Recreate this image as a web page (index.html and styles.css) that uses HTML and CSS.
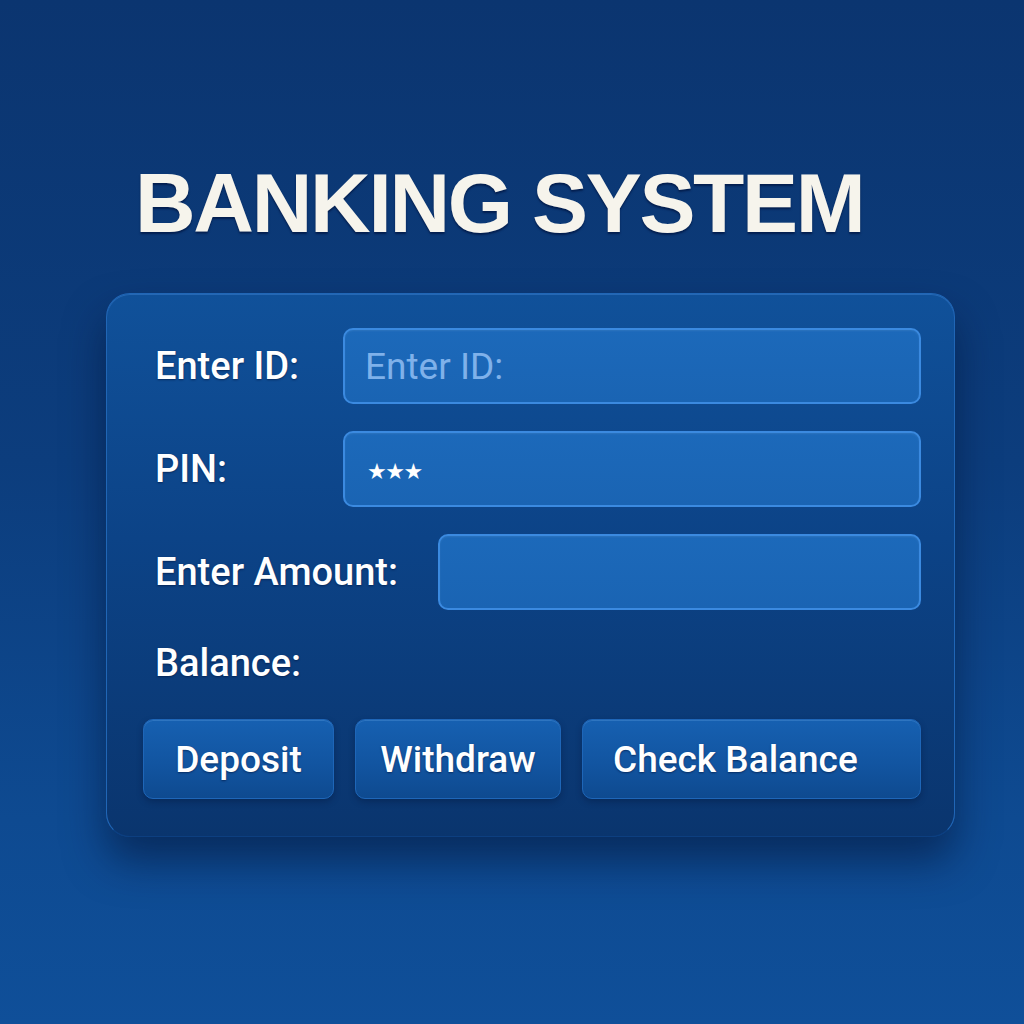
FILE: index.html
```html
<!DOCTYPE html>
<html lang="en">
<head>
<meta charset="utf-8">
<title>Banking System</title>
<link rel="stylesheet" href="styles.css">
</head>
<body>
  <main class="page">
    <h1 class="title">BANKING SYSTEM</h1>
    <section class="card">
      <div class="row">
        <label class="label" for="uid">Enter ID:</label>
        <input class="field" id="uid" type="text" placeholder="Enter ID:">
      </div>
      <div class="row">
        <label class="label" for="pin">PIN:</label>
        <div class="field field-pin" id="pin"><span class="stars">★★★</span></div>
      </div>
      <div class="row row-amount">
        <label class="label label-wide" for="amt">Enter Amount:</label>
        <input class="field" id="amt" type="text">
      </div>
      <div class="balance-row">
        <span class="label">Balance:</span>
      </div>
      <div class="actions">
        <button class="btn btn-deposit">Deposit</button>
        <button class="btn btn-withdraw">Withdraw</button>
        <button class="btn btn-check">Check Balance</button>
      </div>
    </section>
  </main>
</body>
</html>
```
FILE: styles.css
```css
html, body {
  margin: 0;
  padding: 0;
}
body {
  width: 1024px;
  height: 1024px;
  overflow: hidden;
  background: linear-gradient(180deg, #0b3570 0%, #0c3d7d 45%, #0e4a91 80%, #0f4f99 100%);
  font-family: Roboto, "Noto Sans", sans-serif;
  color: #ffffff;
}
.page {
  padding-top: 161px;
}
.title {
  margin: 0 0 48px 135px;
  font-family: "Liberation Sans", Arial, sans-serif;
  font-weight: 700;
  font-size: 84px;
  line-height: 84px;
  height: 84px;
  letter-spacing: -2.3px;
  color: #f6f4ec;
  text-shadow: 0 2px 2px rgba(2, 22, 66, 0.75);
  white-space: nowrap;
}
.card {
  box-sizing: border-box;
  margin-left: 106px;
  width: 849px;
  height: 544px;
  padding: 34px 33px 37px 36px;
  border-radius: 24px;
  border: 1px solid #2066b6;
  border-bottom-color: #0d3f80;
  background: linear-gradient(180deg, #10519a 0%, #0c4387 45%, #0a356e 100%);
  box-shadow: 0 24px 40px rgba(3, 20, 55, 0.55), inset 0 1px 0 rgba(80, 150, 230, 0.35);
  display: flex;
  flex-direction: column;
}
.row {
  display: flex;
  align-items: center;
  height: 76px;
  margin-bottom: 27px;
}
.row-amount {
  margin-bottom: 0;
}
.label {
  box-sizing: border-box;
  flex: 0 0 200px;
  padding-left: 12px;
  font-size: 38px;
  font-weight: 500;
  line-height: 38px;
  color: #ffffff;
  text-shadow: 0 1px 2px rgba(2, 20, 60, 0.6);
  white-space: nowrap;
}
.label-wide {
  flex-basis: 295px;
}
.field {
  box-sizing: border-box;
  flex: 1 1 0;
  width: 0;
  min-width: 0;
  height: 76px;
  margin: 0;
  padding: 0 0 0 20px;
  border: 2px solid #3b8ae0;
  border-radius: 10px;
  background: linear-gradient(180deg, #1c69ba 0%, #1a64b3 100%);
  box-shadow: inset 0 1px 2px rgba(255, 255, 255, 0.08);
  font-family: Roboto, "Noto Sans", sans-serif;
  font-size: 37px;
  color: #ffffff;
  outline: none;
}
.field::placeholder {
  color: #7fb1ea;
  opacity: 1;
}
.field-pin {
  display: flex;
  align-items: center;
  padding-left: 22px;
}
.stars {
  font-family: "DejaVu Sans", sans-serif;
  font-size: 22px;
  letter-spacing: -1.5px;
  color: #ffffff;
  padding-top: 4px;
}
.balance-row {
  display: flex;
  align-items: center;
  height: 111px;
  padding-bottom: 4px;
  box-sizing: border-box;
}
.actions {
  display: flex;
  gap: 21px;
  height: 80px;
}
.btn {
  box-sizing: border-box;
  height: 80px;
  margin: 0;
  padding: 0;
  border: 1px solid #1e66b8;
  border-radius: 10px;
  background: linear-gradient(180deg, #1660b1 0%, #1255a1 55%, #0e4a90 100%);
  box-shadow: 0 3px 6px rgba(3, 20, 55, 0.35), inset 0 1px 0 rgba(120, 180, 240, 0.25);
  font-family: Roboto, "Noto Sans", sans-serif;
  font-size: 37px;
  font-weight: 500;
  color: #ffffff;
  text-shadow: 0 1px 2px rgba(2, 20, 60, 0.6);
  cursor: pointer;
}
.btn-deposit {
  flex: 0 0 191px;
}
.btn-withdraw {
  flex: 0 0 206px;
}
.btn-check {
  flex: 1;
  text-align: left;
  padding-left: 30px;
}
```
